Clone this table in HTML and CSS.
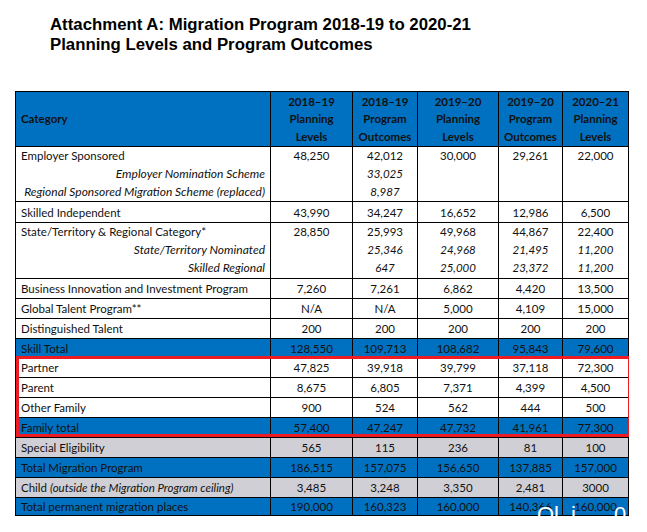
FILE: index.html
```html
<!DOCTYPE html>
<html>
<head>
<meta charset="utf-8">
<link rel="stylesheet" href="styles.css">
</head>
<body>
<h1 class="title">Attachment A: Migration Program 2018-19 to 2020-21<br>Planning Levels and Program Outcomes</h1>
<div class="wrap">
<table class="mig">
<colgroup>
<col class="c1"><col class="c2"><col class="c3"><col class="c4"><col class="c5"><col class="c6">
</colgroup>
<thead>
<tr class="hd blue">
<th class="cat">Category</th>
<th>2018–19<br>Planning<br>Levels</th>
<th>2018–19<br>Program<br>Outcomes</th>
<th>2019–20<br>Planning<br>Levels</th>
<th>2019–20<br>Program<br>Outcomes</th>
<th>2020–21<br>Planning<br>Levels</th>
</tr>
</thead>
<tbody>
<tr class="multi">
<td class="cat"><div>Employer Sponsored</div><div class="sub">Employer Nomination Scheme</div><div class="sub">Regional Sponsored Migration Scheme (replaced)</div></td>
<td><div>48,250</div></td>
<td><div>42,012</div><div class="it">33,025</div><div class="it">8,987</div></td>
<td><div>30,000</div></td>
<td><div>29,261</div></td>
<td><div>22,000</div></td>
</tr>
<tr class="r21"><td class="cat">Skilled Independent</td><td>43,990</td><td>34,247</td><td>16,652</td><td>12,986</td><td>6,500</td></tr>
<tr class="multi m56">
<td class="cat"><div>State/Territory &amp; Regional Category*</div><div class="sub">State/Territory Nominated</div><div class="sub">Skilled Regional</div></td>
<td><div>28,850</div></td>
<td><div>25,993</div><div class="it">25,346</div><div class="it">647</div></td>
<td><div>49,968</div><div class="it">24,968</div><div class="it">25,000</div></td>
<td><div>44,867</div><div class="it">21,495</div><div class="it">23,372</div></td>
<td><div>22,400</div><div class="it">11,200</div><div class="it">11,200</div></td>
</tr>
<tr><td class="cat">Business Innovation and Investment Program</td><td>7,260</td><td>7,261</td><td>6,862</td><td>4,420</td><td>13,500</td></tr>
<tr><td class="cat">Global Talent Program**</td><td>N/A</td><td>N/A</td><td>5,000</td><td>4,109</td><td>15,000</td></tr>
<tr><td class="cat">Distinguished Talent</td><td>200</td><td>200</td><td>200</td><td>200</td><td>200</td></tr>
<tr class="blue r19"><td class="cat">Skill Total</td><td>128,550</td><td>109,713</td><td>108,682</td><td>95,843</td><td>79,600</td></tr>
<tr><td class="cat">Partner</td><td>47,825</td><td>39,918</td><td>39,799</td><td>37,118</td><td>72,300</td></tr>
<tr><td class="cat">Parent</td><td>8,675</td><td>6,805</td><td>7,371</td><td>4,399</td><td>4,500</td></tr>
<tr><td class="cat">Other Family</td><td>900</td><td>524</td><td>562</td><td>444</td><td>500</td></tr>
<tr class="blue"><td class="cat">Family total</td><td>57,400</td><td>47,247</td><td>47,732</td><td>41,961</td><td>77,300</td></tr>
<tr class="grey"><td class="cat">Special Eligibility</td><td>565</td><td>115</td><td>236</td><td>81</td><td>100</td></tr>
<tr class="blue"><td class="cat">Total Migration Program</td><td>186,515</td><td>157,075</td><td>156,650</td><td>137,885</td><td>157,000</td></tr>
<tr class="grey"><td class="cat">Child <i>(outside the Migration Program ceiling)</i></td><td>3,485</td><td>3,248</td><td>3,350</td><td>2,481</td><td>3000</td></tr>
<tr class="blue last"><td class="cat">Total permanent migration places</td><td>190,000</td><td>160,323</td><td>160,000</td><td>140,366</td><td>160,000</td></tr>
</tbody>
</table>
<div class="redbox"></div>
<div class="watermark">Ol<span class="gap">i</span><span class="gap2">0</span></div>
</div>
</body>
</html>
```
FILE: styles.css
```css
html, body {
  margin: 0;
  padding: 0;
  background: #ffffff;
}
body {
  width: 647px;
  height: 532px;
  overflow: hidden;
}
.title {
  margin: 0;
  padding: 15px 0 0 50px;
  font-family: "Liberation Sans", Arial, sans-serif;
  font-weight: bold;
  font-size: 16.8px;
  line-height: 19.5px;
  color: #000;
}
.wrap {
  position: relative;
  margin: 37px 0 0 15px;
  width: 614px;
  height: 440px;
  overflow: hidden;
}
.mig {
  border-collapse: collapse;
  table-layout: fixed;
  width: 614px;
  font-family: Lato, "Open Sans", sans-serif;
  font-size: 11.5px;
  color: #111;
  border: 1.5px solid #000;
}
.c1 { width: 255px; }
.c2 { width: 82px; }
.c3 { width: 65px; }
.c4 { width: 81px; }
.c5 { width: 64px; }
.c6 { width: 66px; }
.mig tr {
  height: 20px;
}
.mig th, .mig td {
  border: 1px solid #000;
  padding: 0 4px;
  text-align: center;
  line-height: 17px;
  white-space: nowrap;
}
.mig .cat {
  text-align: left;
  padding-left: 5px;
}
.mig tr.hd {
  height: 55px;
}
.hd th {
  font-weight: bold;
  line-height: 17.5px;
}
.blue td, .blue th {
  background: #0070c0;
}
.grey td {
  background: #d0cfd5;
}
.mig tr.multi {
  height: 55px;
}
.mig tr.m56 {
  height: 56px;
}
.multi td {
  vertical-align: top;
  padding-top: 0;
  line-height: 18px;
}
.multi .sub {
  text-align: right;
  font-style: italic;
  font-size: 12px;
  padding-right: 1px;
}
.it {
  font-style: italic;
}
.mig tr.r21 {
  height: 21px;
}
.mig tr.r19 {
  height: 19px;
}
.mig tr.last {
  height: 18px;
}
.redbox {
  position: absolute;
  left: 1px;
  top: 265px;
  width: 609px;
  height: 75px;
  border: 3px solid #ee1c22;
  pointer-events: none;
}
.watermark {
  position: absolute;
  left: 522px;
  top: 412px;
  font-family: "Liberation Sans", Arial, sans-serif;
  font-size: 22px;
  line-height: 24px;
  color: #fff;
  white-space: nowrap;
}
.gap { margin-left: 12px; }
.gap2 { margin-left: 38px; }
```
